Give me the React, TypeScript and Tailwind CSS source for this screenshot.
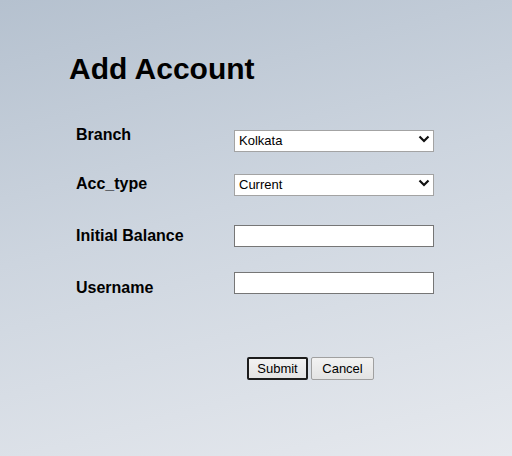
const Chevron = () => (
  <svg
    className="pointer-events-none absolute right-[4px] top-1/2 -translate-y-1/2"
    width="12"
    height="8"
    viewBox="0 0 12 8"
    fill="none"
  >
    <path d="M1.5 1.5 L6 6 L10.5 1.5" stroke="#111" strokeWidth="2.2" />
  </svg>
);

const SelectBox = ({ value, options }: { value: string; options: string[] }) => (
  <div className="relative h-[22px] w-[200px]">
    <select
      defaultValue={value}
      className="h-full w-full appearance-none border border-[#a3a3a3] bg-white pl-[4px] text-[13px] leading-none text-black outline-none"
    >
      {options.map((o) => (
        <option key={o}>{o}</option>
      ))}
    </select>
    <Chevron />
  </div>
);

const TextBox = () => (
  <input
    type="text"
    className="h-[22px] w-[200px] border border-[#767676] bg-white px-1 text-[13px] outline-none"
  />
);

const App = () => {
  return (
    <div className="h-[456px] w-[512px] bg-[linear-gradient(165deg,#b5c1cf_0%,#cdd5df_45%,#e6e9ee_100%)] pl-[69px] pt-[50px] font-['Liberation_Sans',Arial,sans-serif] text-black">
      <h1 className="text-[30px] font-bold leading-[38px]">Add Account</h1>

      <form className="mt-[32px] pl-[7px]">
        <div className="flex h-[40px] items-start">
          <label className="w-[158px] pt-[3px] text-[16px] font-bold">Branch</label>
          <div className="pt-[8px]">
            <SelectBox value="Kolkata" options={["Kolkata", "Mumbai", "Delhi", "Chennai"]} />
          </div>
        </div>
        <div className="flex h-[50px] items-start">
          <label className="w-[158px] pt-[12px] text-[16px] font-bold">Acc_type</label>
          <div className="pt-[12px]">
            <SelectBox value="Current" options={["Current", "Savings"]} />
          </div>
        </div>
        <div className="flex h-[50px] items-start">
          <label className="w-[158px] pt-[14px] text-[16px] font-bold">Initial Balance</label>
          <div className="pt-[13px]">
            <TextBox />
          </div>
        </div>
        <div className="flex h-[50px] items-start">
          <label className="w-[158px] pt-[16px] text-[16px] font-bold">Username</label>
          <div className="pt-[10px]">
            <TextBox />
          </div>
        </div>

        <div className="ml-[171px] mt-[47px] flex gap-[3px]">
          <button
            type="submit"
            className="h-[23px] w-[61px] rounded-[2px] border-2 border-[#1c1c1c] bg-[linear-gradient(#f2f2f2,#e3e3e3)] text-[13px] leading-none"
          >
            Submit
          </button>
          <button
            type="button"
            className="h-[23px] w-[63px] rounded-[2px] border border-[#a0a0a0] bg-[linear-gradient(#f2f2f2,#e3e3e3)] text-[13px] leading-none"
          >
            Cancel
          </button>
        </div>
      </form>
    </div>
  );
};

export default App;
